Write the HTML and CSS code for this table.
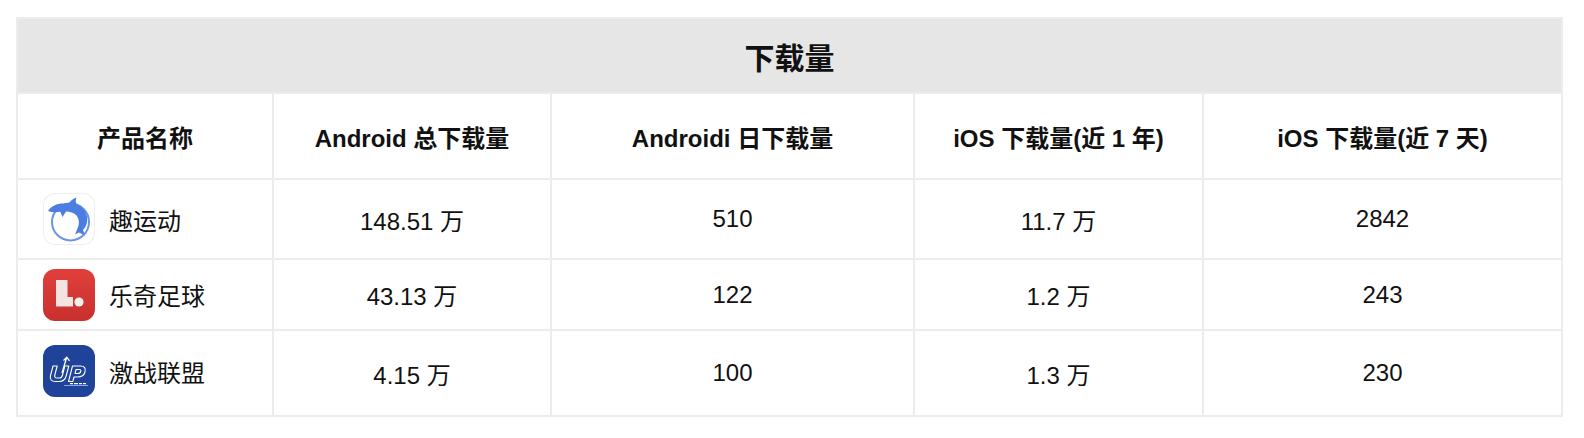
FILE: index.html
```html
<!DOCTYPE html>
<html lang="zh-CN">
<head>
<meta charset="utf-8">
<title>下载量</title>
<link rel="stylesheet" href="styles.css">
</head>
<body>
<table class="dl-table">
  <colgroup>
    <col class="c1"><col class="c2"><col class="c3"><col class="c4"><col class="c5">
  </colgroup>
  <thead>
    <tr class="title-row"><th colspan="5">下载量</th></tr>
    <tr class="head-row">
      <th>产品名称</th>
      <th>Android 总下载量</th>
      <th>Androidi 日下载量</th>
      <th>iOS 下载量(近 1 年)</th>
      <th>iOS 下载量(近 7 天)</th>
    </tr>
  </thead>
  <tbody>
    <tr class="r1">
      <td class="name">
        <div class="prod">
          <span class="icon icon-qu">
            <svg viewBox="0 0 52 52" width="52" height="52">
              <circle cx="27.5" cy="29" r="18.5" fill="none" stroke="#6b93ea" stroke-width="2"/>
              <path d="M5 18 C8 13 14 10.5 20 10.5 L26 10 C28 7.5 30 5.5 33.5 4.5 C32.5 7 32.5 9 33.5 11 C39 13 43 18 44 24 C45 29 43 34 40 37 L42 42.5 L36 39.5 L32 41.5 L34.5 35.5 C36.5 31 36.5 26.5 33.5 22.5 C30.5 19.5 27 18.5 23 18.5 L19.5 24 L17.3 18.8 C13 19.5 9 19.5 5 18 Z" fill="#4c7ee2"/>
            </svg>
          </span>
          <span>趣运动</span>
        </div>
      </td>
      <td>148.51 万</td>
      <td>510</td>
      <td>11.7 万</td>
      <td>2842</td>
    </tr>
    <tr class="r2">
      <td class="name">
        <div class="prod">
          <span class="icon icon-le">
            <svg viewBox="0 0 52 52" width="52" height="52">
              <path d="M13 11 H24.5 V28 H30 V37.5 H13 Z" fill="#f3e3e3"/>
              <circle cx="36" cy="33" r="4.6" fill="#f6eded"/>
            </svg>
          </span>
          <span>乐奇足球</span>
        </div>
      </td>
      <td>43.13 万</td>
      <td>122</td>
      <td>1.2 万</td>
      <td>243</td>
    </tr>
    <tr class="r3">
      <td class="name">
        <div class="prod">
          <span class="icon icon-up">
            <svg viewBox="0 0 52 52" width="52" height="52">
              <path d="M10 21 L7.5 30.5 C6.5 34.5 8.5 36.5 12.5 36.5 L16 36.5 C20 36.5 22.3 34.5 23.3 30.5 L25.8 21 L21.8 21 L19.5 30 C19 32 18 33 16.5 33 L14 33 C12 33 11.3 32 11.8 30 L14.2 21 Z" fill="none" stroke="#ffffff" stroke-width="1.1" stroke-linejoin="round"/>
              <path d="M25.5 36.5 L29.5 21 L37.5 21 C41.5 21 43 23.5 42 27 C41 30.5 38 32 34.5 32 L31 32 L29.8 36.5 Z M32 28.5 L34.5 28.5 C36.5 28.5 37.5 27.5 37.8 26.3 C38.1 25 37.3 24.5 36 24.5 L33 24.5 Z" fill="none" stroke="#ffffff" stroke-width="1.1" stroke-linejoin="round"/>
              <path d="M19 28 L23.5 13 M20.5 15.5 L23.8 12.2 L26.5 15.8" fill="none" stroke="#ffffff" stroke-width="1.3"/>
              <path d="M21 40.5 H45" stroke="#8ea6e6" stroke-width="1.2"/>
              <path d="M27 38.6 H30 M31 38.6 H35 M36 38.6 H39 M40 38.6 H43" stroke="#ffffff" stroke-width="1.2"/>
            </svg>
          </span>
          <span>激战联盟</span>
        </div>
      </td>
      <td>4.15 万</td>
      <td>100</td>
      <td>1.3 万</td>
      <td>230</td>
    </tr>
  </tbody>
</table>
</body>
</html>
```
FILE: styles.css
```css
html, body {
  margin: 0;
  padding: 0;
  background: #ffffff;
}
body {
  padding: 17px 0 0 16px;
  font-family: "Liberation Sans", "Noto Sans CJK SC", sans-serif;
  color: #111;
}
.dl-table {
  border-collapse: collapse;
  width: 1545px;
  table-layout: fixed;
}
.c1 { width: 256px; }
.c2 { width: 278px; }
.c3 { width: 363px; }
.c4 { width: 289px; }
.c5 { width: 359px; }
.dl-table th,
.dl-table td {
  border: 2px solid #ececec;
  text-align: center;
  vertical-align: middle;
  padding: 0;
}
.title-row th {
  background: #e6e6e6;
  height: 73px;
  font-size: 30px;
  font-weight: bold;
  color: #111;
}
.head-row th {
  height: 84px;
  font-size: 24px;
  font-weight: bold;
  color: #111;
}
.dl-table td {
  font-size: 24px;
  color: #111;
}
.r1 td { height: 78px; }
.r2 td { height: 69px; }
.r3 td { height: 84px; }
.dl-table td.name {
  text-align: left;
  padding-left: 25px;
}
.prod {
  display: flex;
  align-items: center;
  gap: 14px;
  font-size: 24px;
}
.r3 .prod {
  margin-top: -4px;
}
.icon {
  width: 52px;
  height: 52px;
  border-radius: 12px;
  display: block;
  overflow: hidden;
  flex: none;
}
.icon svg { display: block; }
.icon-qu {
  background: #fff;
  box-shadow: inset 0 0 0 1px #eeeeee;
}
.icon-le {
  background: linear-gradient(180deg, #e0403c 0%, #c8302d 100%);
}
.icon-up {
  background: #1f4399;
}
```
